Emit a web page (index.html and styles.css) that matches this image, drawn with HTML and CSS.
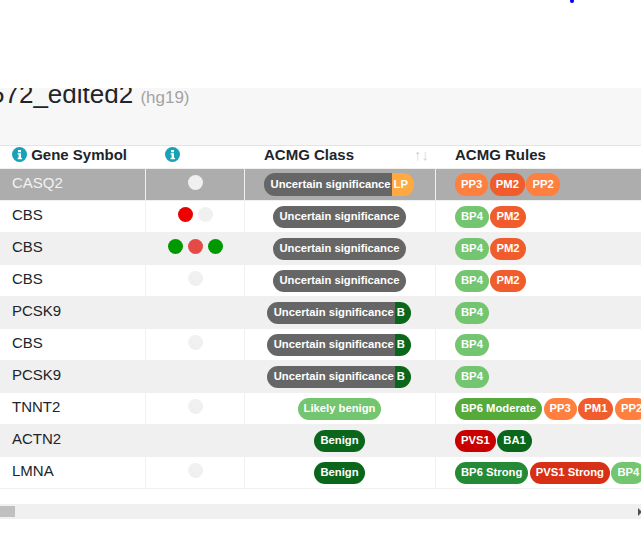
FILE: index.html
```html
<!DOCTYPE html>
<html lang="en">
<head>
<meta charset="utf-8">
<title>Variants</title>
<link rel="stylesheet" href="styles.css">
</head>
<body>
<div class="page">
  <span class="speck"></span>
  <div class="spacer"></div>
  <div class="band">
    <h2 class="title">572_edited2 <small class="build">(hg19)</small></h2>
  </div>
  <div class="table-clip">
    <table class="grid">
      <colgroup><col class="c1"><col class="c2"><col class="c3"><col class="c4"></colgroup>
      <thead>
        <tr>
          <th class="h1"><svg class="info" viewBox="0 0 15 15"><circle cx="7.5" cy="7.5" r="7.5" fill="#17a2b8"/><path d="M6 3h3v2.2H6zM5.6 6.2h3.4v4.6h1v1.4H5.6v-1.4h1V7.6h-1z" fill="#fff"/></svg> Gene Symbol</th>
          <th class="h2"><svg class="info" viewBox="0 0 15 15"><circle cx="7.5" cy="7.5" r="7.5" fill="#17a2b8"/><path d="M6 3h3v2.2H6zM5.6 6.2h3.4v4.6h1v1.4H5.6v-1.4h1V7.6h-1z" fill="#fff"/></svg></th>
          <th class="h3"><span>ACMG Class</span><span class="sort">↑↓</span></th>
          <th class="h4">ACMG Rules</th>
        </tr>
      </thead>
      <tbody>
        <tr class="selected">
          <td class="gene">CASQ2</td>
          <td><div class="dots"><i class="dot light"></i></div></td>
          <td><div class="cls"><span class="split"><span class="pill grey sq">Uncertain significance</span><span class="pill lp sl">LP</span></span></div></td>
          <td><div class="rules"><span class="pill pp">PP3</span><span class="pill pm">PM2</span><span class="pill pp">PP2</span></div></td>
        </tr>
        <tr>
          <td class="gene">CBS</td>
          <td><div class="dots"><i class="dot red"></i><i class="dot none"></i></div></td>
          <td><div class="cls"><span class="pill grey">Uncertain significance</span></div></td>
          <td><div class="rules"><span class="pill bp4">BP4</span><span class="pill pm">PM2</span></div></td>
        </tr>
        <tr class="alt">
          <td class="gene">CBS</td>
          <td><div class="dots"><i class="dot green"></i><i class="dot soft"></i><i class="dot green"></i></div></td>
          <td><div class="cls"><span class="pill grey">Uncertain significance</span></div></td>
          <td><div class="rules"><span class="pill bp4">BP4</span><span class="pill pm">PM2</span></div></td>
        </tr>
        <tr>
          <td class="gene">CBS</td>
          <td><div class="dots"><i class="dot none"></i></div></td>
          <td><div class="cls"><span class="pill grey">Uncertain significance</span></div></td>
          <td><div class="rules"><span class="pill bp4">BP4</span><span class="pill pm">PM2</span></div></td>
        </tr>
        <tr class="alt">
          <td class="gene">PCSK9</td>
          <td><div class="dots"></div></td>
          <td><div class="cls"><span class="split"><span class="pill grey sq">Uncertain significance</span><span class="pill ben sl">B</span></span></div></td>
          <td><div class="rules"><span class="pill bp4">BP4</span></div></td>
        </tr>
        <tr>
          <td class="gene">CBS</td>
          <td><div class="dots"><i class="dot none"></i></div></td>
          <td><div class="cls"><span class="split"><span class="pill grey sq">Uncertain significance</span><span class="pill ben sl">B</span></span></div></td>
          <td><div class="rules"><span class="pill bp4">BP4</span></div></td>
        </tr>
        <tr class="alt">
          <td class="gene">PCSK9</td>
          <td><div class="dots"></div></td>
          <td><div class="cls"><span class="split"><span class="pill grey sq">Uncertain significance</span><span class="pill ben sl">B</span></span></div></td>
          <td><div class="rules"><span class="pill bp4">BP4</span></div></td>
        </tr>
        <tr>
          <td class="gene">TNNT2</td>
          <td><div class="dots"><i class="dot none"></i></div></td>
          <td><div class="cls"><span class="pill bp4">Likely benign</span></div></td>
          <td><div class="rules"><span class="pill bp6m">BP6 Moderate</span><span class="pill pp">PP3</span><span class="pill pm">PM1</span><span class="pill pp">PP2</span></div></td>
        </tr>
        <tr class="alt">
          <td class="gene">ACTN2</td>
          <td><div class="dots"></div></td>
          <td><div class="cls"><span class="pill ben">Benign</span></div></td>
          <td><div class="rules"><span class="pill pvs">PVS1</span><span class="pill ben">BA1</span></div></td>
        </tr>
        <tr>
          <td class="gene">LMNA</td>
          <td><div class="dots"><i class="dot none"></i></div></td>
          <td><div class="cls"><span class="pill ben">Benign</span></div></td>
          <td><div class="rules"><span class="pill bp6s">BP6 Strong</span><span class="pill pvss">PVS1 Strong</span><span class="pill bp4">BP4</span></div></td>
        </tr>
      </tbody>
    </table>
  </div>
  <div class="scrollbar">
    <div class="thumb"></div>
    <div class="arrow"></div>
  </div>
</div>
</body>
</html>
```
FILE: styles.css
```css
html, body {
  margin: 0;
  padding: 0;
  background: #fff;
  overflow: hidden;
}
.page {
  position: relative;
  width: 641px;
  height: 560px;
  overflow: hidden;
  font-family: "Liberation Sans", Arial, sans-serif;
  color: #212529;
}
.speck {
  position: absolute;
  left: 570px;
  top: -1px;
  width: 4px;
  height: 4px;
  border-radius: 50%;
  background: #0000ee;
}
.spacer { height: 88px; }
.band {
  height: 57px;
  background: #f7f7f7;
  overflow: hidden;
}
.title {
  margin: -11px 0 0 -10px;
  font-size: 26px;
  font-weight: 400;
  line-height: 34px;
  white-space: nowrap;
}
.build {
  font-size: 17px;
  color: #a3a3a3;
}
.table-clip {
  width: 641px;
  height: 359px;
  overflow: hidden;
}
.grid {
  table-layout: fixed;
  width: 900px;
  border-collapse: separate;
  border-spacing: 0;
  font-size: 15px;
}
.c1 { width: 146px; }
.c2 { width: 99px; }
.c3 { width: 191px; }
.c4 { width: 464px; }
th {
  height: 22px;
  padding: 0;
  border-top: 1px solid #e3e3e3;
  text-align: left;
  font-weight: 700;
  line-height: 17px;
  vertical-align: top;
  white-space: nowrap;
}
.info {
  display: inline-block;
  width: 15px;
  height: 15px;
  vertical-align: -2px;
}
.h1 { padding-left: 12px; }
.h2 { padding-left: 19px; }
.h3 { padding-left: 19px; position: relative; }
.h4 { padding-left: 19px; }
.sort {
  position: absolute;
  right: 7px;
  top: 0;
  font-weight: 400;
  font-size: 15px;
  color: #d4d4d4;
}
td {
  padding: 0;
  border-top: 1px solid #f0f0f0;
  border-right: 1px solid #f0f0f0;
  vertical-align: top;
  box-sizing: border-box;
  height: 32px;
}
td:last-child { border-right: 0; }
tbody tr:last-child td { border-bottom: 1px solid #f0f0f0; height: 33px; }
.alt td { background: #f0f0f0; }
.selected td {
  background: #adadad;
  color: #f2f2f2;
}
.gene {
  padding: 5px 0 0 12px;
  line-height: 18px;
  font-size: 15px;
}
.dots {
  display: flex;
  justify-content: center;
  gap: 5px;
  padding-top: 6px;
}
.dot {
  display: block;
  width: 15px;
  height: 15px;
  border-radius: 50%;
}
.light { background: #f0f0f0; }
.none { background: #f0f0f0; }
.red { background: #ee0000; }
.soft { background: #e64a45; }
.green { background: #009900; }
.cls {
  display: flex;
  justify-content: center;
  padding: 5px 1px 0 0;
}
.rules {
  display: flex;
  gap: 1.5px;
  padding: 5px 0 0 19px;
}
.selected .cls, .selected .rules { padding-top: 4px; }
.pill {
  display: block;
  height: 22px;
  line-height: 21px;
  padding: 0 6px;
  border-radius: 11px;
  font-size: 11.25px;
  font-weight: 700;
  color: #fff;
  white-space: nowrap;
  background: #666;
}
.selected .pill { height: 23px; line-height: 23px; }
.split { display: flex; margin-left: -1px; }
.grey { background: #666; color: #fff; }
.sq { border-radius: 11px 0 0 11px; padding: 0 1.5px 0 6.5px; }
.sl { border-radius: 0 11px 11px 0; padding: 0 6px 0 1.5px; }
.lp { background: #ffa940; }
.ben { background: #0a661b; }
.bp4 { background: #73c66f; }
.pm { background: #f05c2b; }
.pp { background: #ff7f3f; }
.bp6m { background: #56aa3a; }
.bp6s { background: #258a35; }
.pvss { background: #d83016; }
.pvs { background: #c80000; }
.scrollbar {
  position: relative;
  height: 15px;
  background: #f0f0f0;
}
.thumb {
  width: 15px;
  height: 11px;
  position: absolute;
  left: 0;
  top: 2px;
  background: #c0c0c0;
}
.arrow {
  position: absolute;
  left: 638px;
  top: 4px;
  width: 0;
  height: 0;
  border-style: solid;
  border-width: 4px 0 4px 4px;
  border-color: transparent transparent transparent #505050;
}
```
